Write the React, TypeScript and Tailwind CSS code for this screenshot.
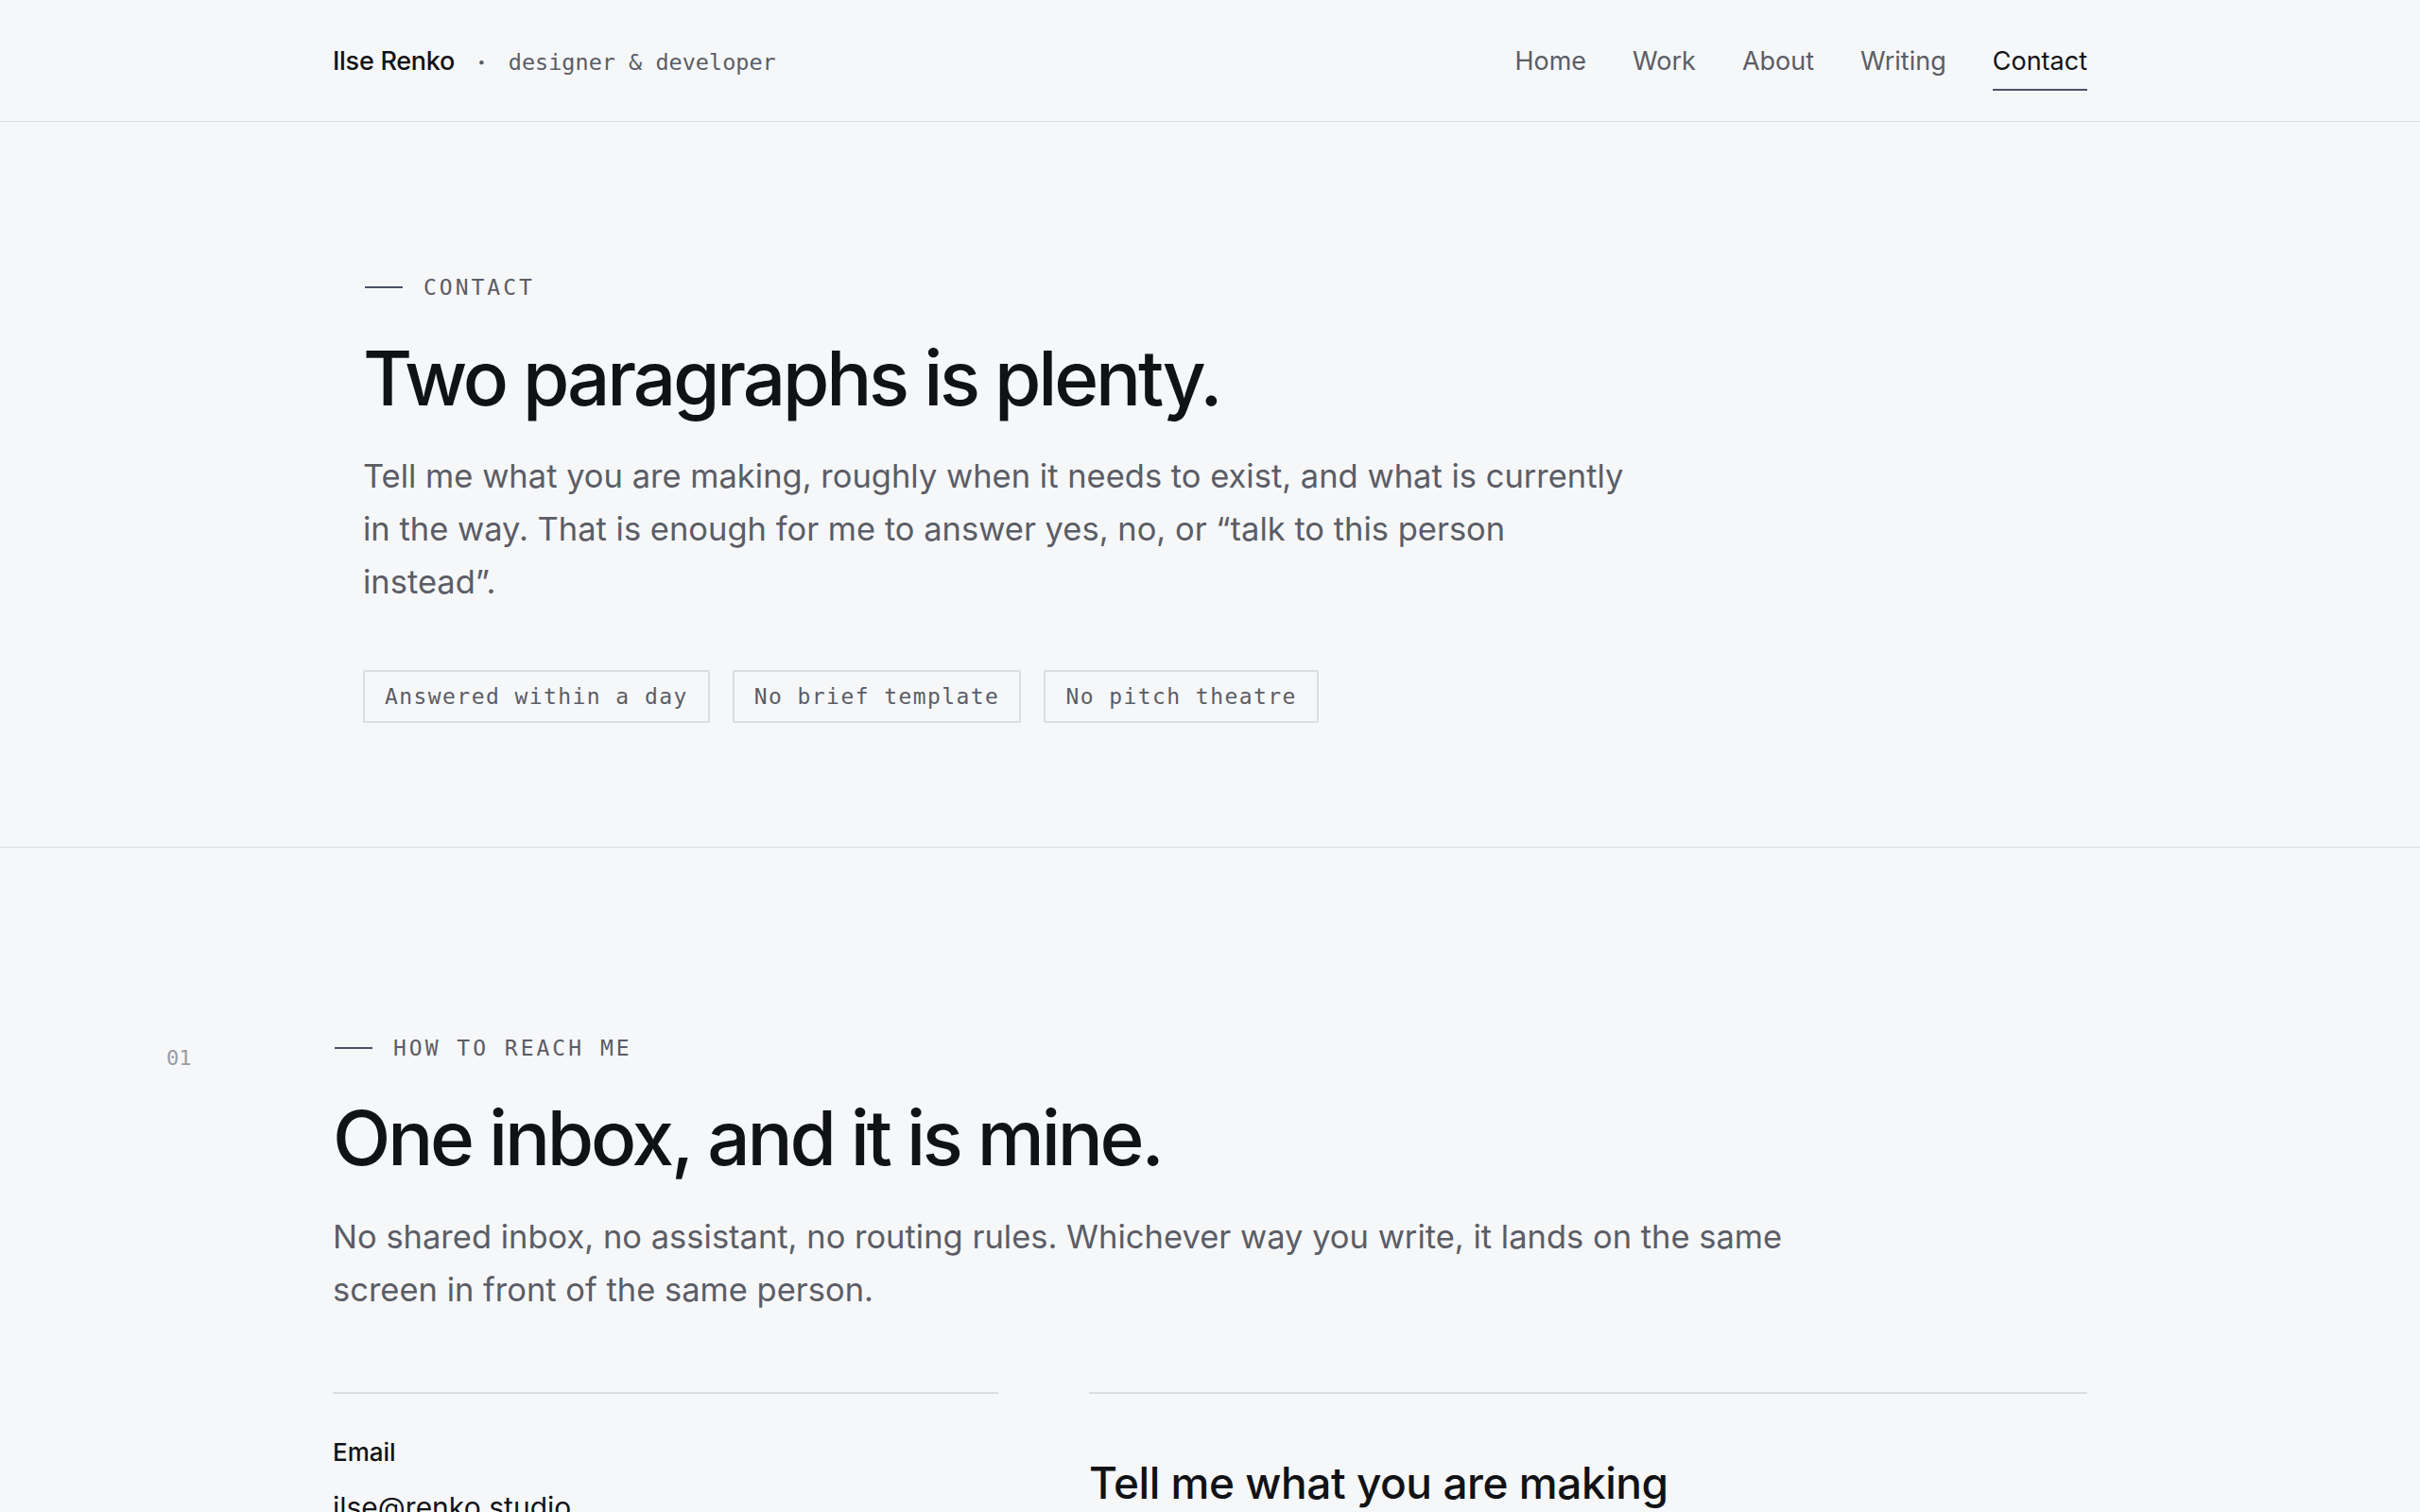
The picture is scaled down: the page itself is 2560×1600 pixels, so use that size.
import React from "react";

const sans = { fontFamily: "Inter, 'Noto Sans', Arial, sans-serif" } as const;
const mono = { fontFamily: "'DejaVu Sans Mono', 'Liberation Mono', monospace" } as const;

function Eyebrow({ label }: { label: string }) {
  return (
    <div className="flex items-center gap-[22px]">
      <span className="ml-[2px] block h-[2px] w-[40px] bg-[#4b5068]" />
      <span style={mono} className="text-[23px] leading-[32px] tracking-[0.13em] text-[#5b5d66] uppercase">
        {label}
      </span>
    </div>
  );
}

export default function App() {
  const nav = ["Home", "Work", "About", "Writing", "Contact"];
  return (
    <div style={sans} className="min-h-screen bg-[#f6f7f9] text-[#111216]">
      <header className="border-b border-[#dcdde1]">
        <div className="mx-auto flex h-[128px] max-w-[1920px] items-center justify-between px-8">
          <div className="flex items-center gap-[24px] pt-[3px]">
            <span className="text-[27px] font-medium tracking-[-0.01em] text-[#111216]">Ilse Renko</span>
            <span className="text-[26px] font-bold text-[#5b5d66]">·</span>
            <span style={mono} className="pt-[2px] text-[23.5px] text-[#5b5d66]">designer &amp; developer</span>
          </div>
          <nav className="flex items-center gap-[49px] pt-[2px]">
            {nav.map((n) => (
              <a
                key={n}
                className={
                  n === "Contact"
                    ? "relative text-[27px] text-[#111216] after:absolute after:left-0 after:right-0 after:top-[49px] after:h-[2px] after:bg-[#4b5068] after:content-['']"
                    : "text-[27px] text-[#5b5d66]"
                }
              >
                {n}
              </a>
            ))}
          </nav>
        </div>
      </header>

      <section className="border-b border-[#dcdde1]">
        <div className="mx-auto max-w-[1920px] px-16 pb-[131px] pt-[159px]">
          <Eyebrow label="Contact" />
          <h1 className="mt-[36px] text-[80px] font-medium leading-[88px] tracking-[-0.04em] text-[#111216]">
            Two paragraphs is plenty.
          </h1>
          <p className="mt-[32px] max-w-[1345px] text-[34.5px] leading-[56px] text-[#5b5d66]">
            Tell me what you are making, roughly when it needs to exist, and what is currently in the way. That is
            enough for me to answer yes, no, or “talk to this person instead”.
          </p>
          <div className="mt-[65px] flex gap-[24px]">
            {["Answered within a day", "No brief template", "No pitch theatre"].map((t) => (
              <span
                key={t}
                style={mono}
                className="flex h-[56px] items-center rounded-[2px] border-2 border-[#dcdde1] px-[21px] text-[23px] tracking-[0.062em] text-[#5b5d66]"
              >
                {t}
              </span>
            ))}
          </div>
        </div>
      </section>

      <section className="grid grid-cols-[1fr_minmax(0,1856px)_1fr] pb-[160px] pt-[196px]">
        <div className="pl-[50%]">
          <span style={mono} className="block pt-[11px] text-[22px] leading-[32px] text-[#9a9ca3]">
            01
          </span>
        </div>
        <div>
          <Eyebrow label="How to reach me" />
          <h2 className="mt-[35px] text-[80px] font-medium leading-[88px] tracking-[-0.04em] text-[#111216]">
            One inbox, and it is mine.
          </h2>
          <p className="mt-[33px] max-w-[1600px] text-[34.5px] leading-[56px] text-[#5b5d66]">
            No shared inbox, no assistant, no routing rules. Whichever way you write, it lands on the same screen in
            front of the same person.
          </p>
          <div className="mt-[80px] grid grid-cols-[2fr_3fr] gap-[96px]">
            <div className="border-t-2 border-[#dcdde1] pt-[44px]">
              <div className="text-[26px] font-medium leading-[36px] text-[#111216]">Email</div>
              <div className="mt-[20px] text-[30px] leading-[40px] text-[#111216]">ilse@renko.studio</div>
            </div>
            <div className="border-t-2 border-[#dcdde1] pt-[66px]">
              <h3 className="text-[46px] font-medium leading-[56px] tracking-[-0.01em] text-[#111216]">
                Tell me what you are making
              </h3>
            </div>
          </div>
        </div>
        <div />
      </section>
    </div>
  );
}
